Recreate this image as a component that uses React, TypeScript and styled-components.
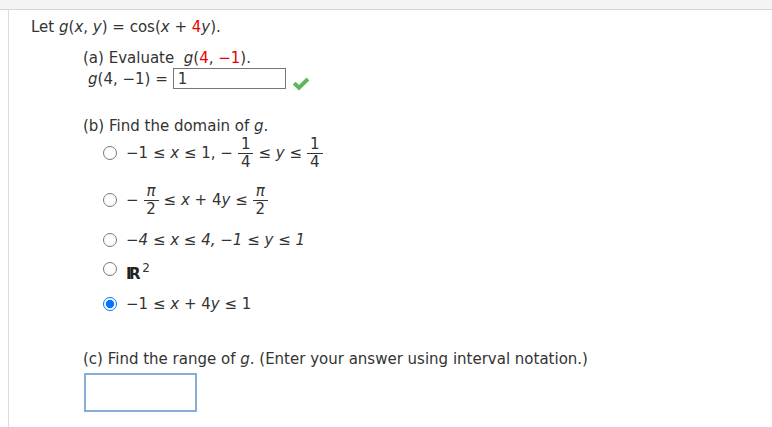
import React from "react";
import styled, { createGlobalStyle } from "styled-components";

const Global = createGlobalStyle`
  html, body { margin: 0; padding: 0; background: #ffffff; }
  body { font-family: "DejaVu Sans", Verdana, sans-serif; color: #333333; }
`;

const Page = styled.div`
  width: 772px;
  height: 427px;
  overflow: hidden;
  background: #ffffff;
`;

const TopStrip = styled.div`
  height: 9px;
  background: #f4f4f4;
  border-bottom: 1px solid #d6d6d6;
`;

const Panel = styled.div`
  margin-left: 8px;
  border-left: 1px solid #dcdcdc;
  height: 417px;
  padding: 7px 0 0 22px;
  box-sizing: border-box;
  font-size: 15px;
  line-height: 20px;
`;

const Line = styled.div<{ $mt?: number }>`
  margin-top: ${(p) => p.$mt ?? 0}px;
  white-space: nowrap;
`;

const Part = styled.div<{ $mt?: number }>`
  margin-left: 52px;
  margin-top: ${(p) => p.$mt ?? 0}px;
`;

const V = styled.i`
  font-style: italic;
`;

const Red = styled.span`
  color: #ee0000;
`;

const AnswerRow = styled.div`
  display: flex;
  align-items: center;
  padding-left: 5px;
  height: 21px;
  white-space: nowrap;
`;

const AnswerInput = styled.input`
  margin-left: 5px;
  width: 113px;
  height: 21px;
  box-sizing: border-box;
  border: 1px solid #767676;
  padding: 0 4px;
  font: inherit;
  font-size: 15px;
  color: #333333;
  outline: none;
  background: #ffffff;
`;

const CheckMark = styled.svg`
  margin-left: 6px;
  margin-top: 10px;
  width: 18px;
  height: 14px;
`;

const Options = styled.div`
  margin-left: 20px;
  margin-top: 1px;
  display: flex;
  flex-direction: column;
`;

const Option = styled.label<{ $mt?: number; $h?: number }>`
  display: flex;
  align-items: center;
  margin-top: ${(p) => p.$mt ?? 0}px;
  height: ${(p) => p.$h ?? 20}px;
  white-space: nowrap;
`;

const Radio = styled.input.attrs({ type: "radio" })`
  margin: 0 9px 0 0;
  width: 14px;
  height: 14px;
  flex: none;
  accent-color: #0075ff;
`;

const Expr = styled.span<{ $italic?: boolean }>`
  display: inline-flex;
  align-items: center;
  font-style: ${(p) => (p.$italic ? "italic" : "normal")};
  white-space: pre;
`;

const Frac = styled.span`
  display: inline-flex;
  flex-direction: column;
  align-items: center;
  margin: 0 5px;
  line-height: 15px;
`;

const Num = styled.span`
  padding: 0 3px 1px;
  border-bottom: 1px solid #333333;
`;

const Den = styled.span`
  padding-top: 1px;
`;

const Reals = styled.span`
  display: inline-block;
  line-height: 20px;
  margin-top: 4px;
`;

const RealsLetters = styled.span`
  font-weight: bold;
  font-size: 15px;
  letter-spacing: -2.5px;
  color: #222222;
`;

const Sup = styled.span`
  font-size: 12px;
  vertical-align: 7px;
  margin-left: 4px;
`;

const RangeInput = styled.input`
  display: block;
  margin-top: 4px;
  margin-left: 1px;
  width: 113px;
  height: 39px;
  box-sizing: border-box;
  border: 2px solid #88acd9;
  outline: none;
  background: #ffffff;
`;

const Pi = () => <V>π</V>;

export default function App() {
  return (
    <Page>
      <Global />
      <TopStrip />
      <Panel>
        <Line>
          Let <V>g</V>(<V>x</V>, <V>y</V>) = cos(<V>x</V> + <Red>4</Red>
          <V>y</V>).
        </Line>
        <Part $mt={11}>
          <Line>
            (a) Evaluate&nbsp; <V>g</V>(<Red>4</Red>, <Red>−1</Red>).
          </Line>
          <AnswerRow>
            <V>g</V>(4, −1) =
            <AnswerInput readOnly value="1" />
            <CheckMark viewBox="0 0 18 14">
              <path
                d="M0.8 7.4 L3.6 4.7 L7 8 L14.5 0.6 L17.3 3.4 L7 13.4 Z"
                fill="#5cb85c"
              />
            </CheckMark>
          </AnswerRow>
        </Part>
        <Part $mt={27}>
          <Line>
            (b) Find the domain of <V>g</V>.
          </Line>
          <Options>
            <Option $h={32}>
              <Radio name="dom" readOnly />
              <Expr>
                −1 ≤ <V>x</V> ≤ 1, −
                <Frac>
                  <Num>1</Num>
                  <Den>4</Den>
                </Frac>
                ≤ <V>y</V> ≤
                <Frac>
                  <Num>1</Num>
                  <Den>4</Den>
                </Frac>
              </Expr>
            </Option>
            <Option $mt={15} $h={32}>
              <Radio name="dom" readOnly />
              <Expr>
                −
                <Frac>
                  <Num>
                    <Pi />
                  </Num>
                  <Den>2</Den>
                </Frac>
                ≤ <V>x</V> + 4<V>y</V> ≤
                <Frac>
                  <Num>
                    <Pi />
                  </Num>
                  <Den>2</Den>
                </Frac>
              </Expr>
            </Option>
            <Option $mt={14}>
              <Radio name="dom" readOnly />
              <Expr $italic>−4 ≤ x ≤ 4, −1 ≤ y ≤ 1</Expr>
            </Option>
            <Option $mt={9}>
              <Radio name="dom" readOnly />
              <Reals>
                <RealsLetters>IR</RealsLetters>
                <Sup>2</Sup>
              </Reals>
            </Option>
            <Option $mt={15}>
              <Radio name="dom" readOnly checked />
              <Expr>
                −1 ≤ <V>x</V> + 4<V>y</V> ≤ 1
              </Expr>
            </Option>
          </Options>
        </Part>
        <Part $mt={35}>
          <Line>
            (c) Find the range of <V>g</V>. (Enter your answer using interval
            notation.)
          </Line>
          <RangeInput readOnly />
        </Part>
      </Panel>
    </Page>
  );
}
